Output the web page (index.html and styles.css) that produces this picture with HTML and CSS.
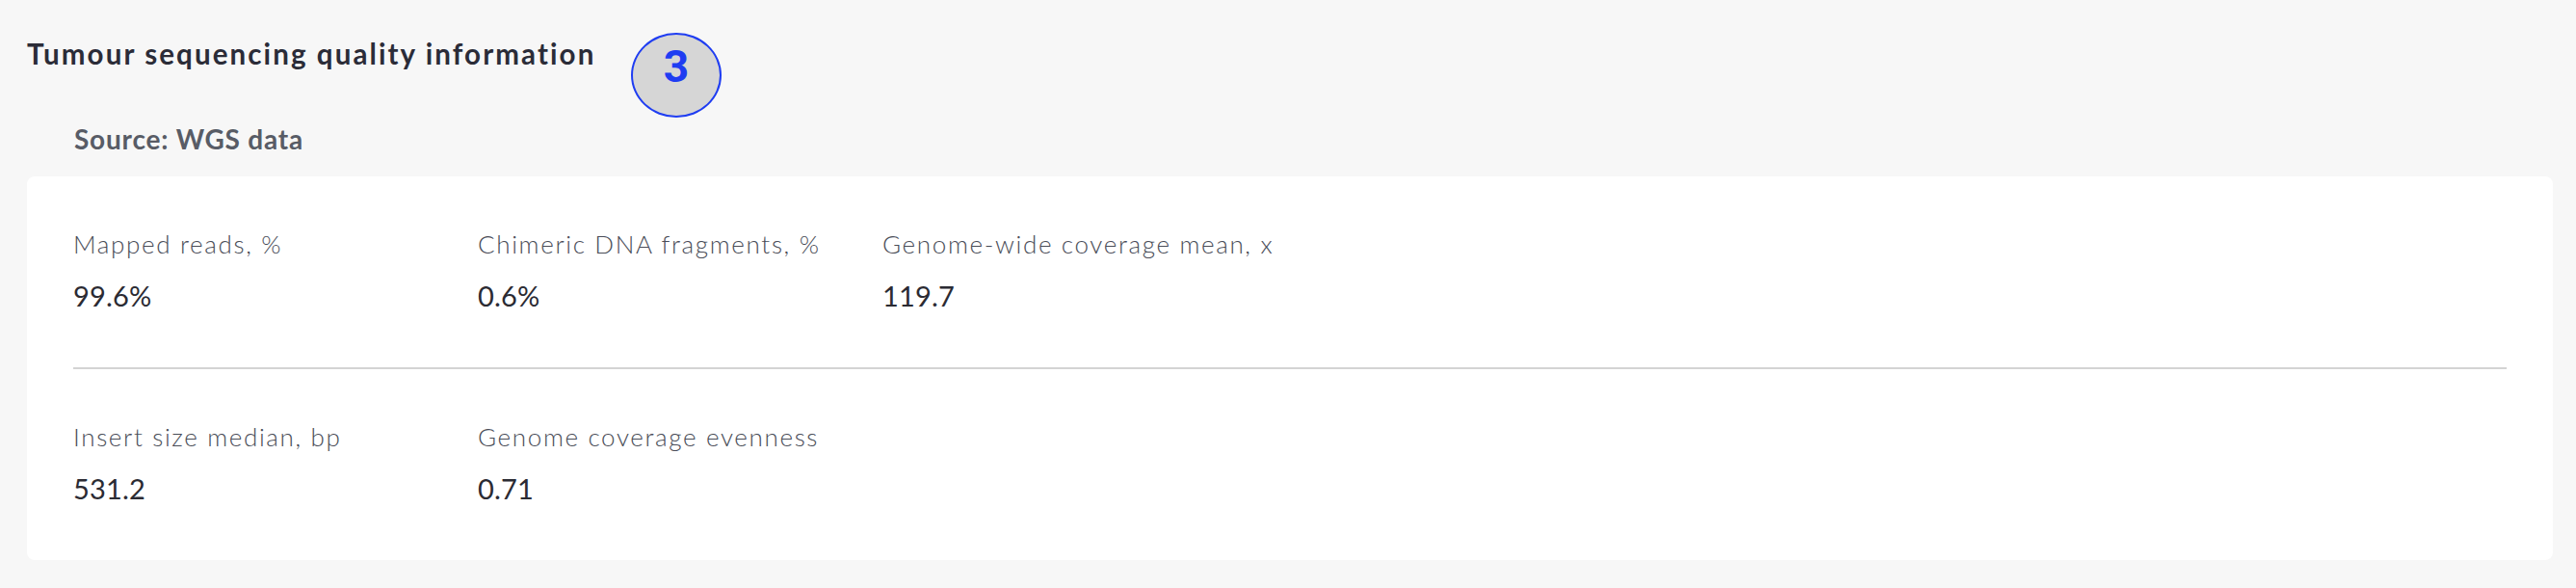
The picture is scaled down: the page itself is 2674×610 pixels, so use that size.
FILE: index.html
```html
<!DOCTYPE html>
<html lang="en">
<head>
<meta charset="utf-8">
<title>Tumour sequencing quality information</title>
<link rel="stylesheet" href="styles.css">
</head>
<body>
<div class="page">
  <header class="head">
    <h2 class="title">Tumour sequencing quality information</h2>
    <span class="badge">3</span>
  </header>
  <div class="source">Source: WGS data</div>
  <section class="card">
    <div class="row">
      <div class="metric">
        <div class="label">Mapped reads, %</div>
        <div class="value">99.6%</div>
      </div>
      <div class="metric">
        <div class="label">Chimeric DNA fragments, %</div>
        <div class="value">0.6%</div>
      </div>
      <div class="metric">
        <div class="label">Genome-wide coverage mean, x</div>
        <div class="value">119.7</div>
      </div>
    </div>
    <hr class="divider">
    <div class="row">
      <div class="metric">
        <div class="label">Insert size median, bp</div>
        <div class="value">531.2</div>
      </div>
      <div class="metric">
        <div class="label">Genome coverage evenness</div>
        <div class="value">0.71</div>
      </div>
    </div>
  </section>
</div>
</body>
</html>
```
FILE: styles.css
```css
* { box-sizing: border-box; }
html, body { margin: 0; padding: 0; }
body {
  background: #f7f7f7;
  font-family: Lato, "Open Sans", sans-serif;
  width: 2674px;
  height: 610px;
  overflow: hidden;
}
.page {
  padding: 36px 24px 0 28px;
}
.head {
  position: relative;
  height: 40px;
}
.title {
  margin: 0;
  font-size: 29.5px;
  line-height: 40px;
  font-weight: 700;
  letter-spacing: 2.1px;
  color: #2b2c38;
  white-space: nowrap;
}
.badge {
  position: absolute;
  left: 627px;
  top: -2px;
  width: 94px;
  height: 88px;
  border: 2px solid #1f3df2;
  border-radius: 50%;
  background: #d6d6d6;
  color: #1f3df2;
  font-family: Roboto, "Liberation Sans", sans-serif;
  font-weight: 700;
  font-size: 46px;
  line-height: 67px;
  text-align: center;
}
.source {
  margin-top: 52px;
  padding-left: 49px;
  font-size: 28px;
  line-height: 32px;
  font-weight: 700;
  letter-spacing: 0.8px;
  color: #585c66;
}
.card {
  margin-top: 23px;
  background: #ffffff;
  border-radius: 8px;
  padding: 0 48px;
}
.row {
  display: flex;
  padding: 50px 0 54px;
}
.metric {
  width: 420px;
}
.label {
  font-size: 26px;
  line-height: 40px;
  font-weight: 300;
  letter-spacing: 1.65px;
  color: #4a4d58;
  white-space: nowrap;
}
.value {
  margin-top: 14px;
  font-size: 29px;
  line-height: 40px;
  font-weight: 400;
  letter-spacing: 0.2px;
  color: #2b2b33;
}
.divider {
  margin: 0;
  border: 0;
  height: 2px;
  background: #d4d4d4;
}
```
